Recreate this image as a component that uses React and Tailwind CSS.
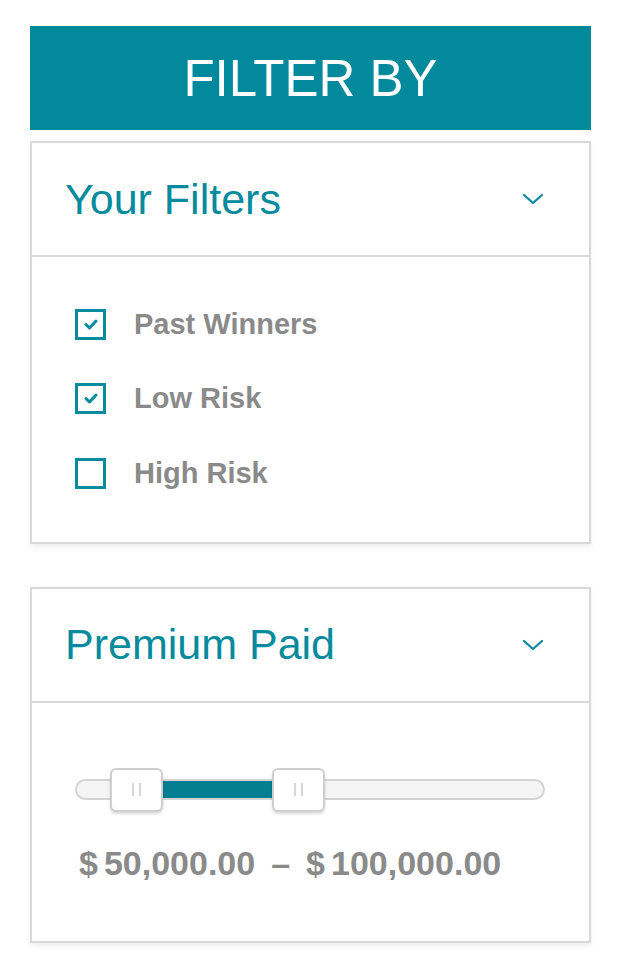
const TEAL = "#058b9d";

function Chevron() {
  return (
    <svg width="22" height="12" viewBox="0 0 22 12" fill="none">
      <path d="M2 2l9 8 9-8" stroke={TEAL} strokeWidth="2.2" strokeLinecap="round" strokeLinejoin="round" />
    </svg>
  );
}

function Checkbox({ label, checked }) {
  return (
    <div className="flex h-[74.5px] items-center">
      <div className="flex h-[31px] w-[31px] items-center justify-center border-[3.5px] border-[#088b9d] bg-white">
        {checked && (
          <svg width="14" height="11" viewBox="0 0 14 11" fill="none">
            <path d="M2 5.5l3.5 3.5L12 2" stroke={TEAL} strokeWidth="3" strokeLinecap="round" strokeLinejoin="round" />
          </svg>
        )}
      </div>
      <span className="ml-[28px] text-[29px] font-bold text-[#8a8a8a]">{label}</span>
    </div>
  );
}

function Card({ title, children, className }) {
  return (
    <div className={"border-2 border-[#d9d9d9] bg-white shadow-[0_3px_6px_rgba(0,0,0,0.07)] " + (className || "")}>
      <div className="flex h-[114px] items-center justify-between border-b-2 border-[#d9d9d9] pl-[33px] pr-[45px]">
        <h2 className="text-[43px] leading-none text-[#058b9d]">{title}</h2>
        <Chevron />
      </div>
      {children}
    </div>
  );
}

function Handle({ left }) {
  return (
    <div
      className="absolute top-0 flex h-[44px] w-[53px] items-center justify-center gap-[5px] rounded-[6px] border-2 border-[#cfcfcf] bg-white shadow-[0_2px_3px_rgba(0,0,0,0.15)]"
      style={{ left }}
    >
      <span className="h-[13px] w-[2px] bg-[#d6d6d6]" />
      <span className="h-[13px] w-[2px] bg-[#d6d6d6]" />
    </div>
  );
}

function RangeSlider() {
  return (
    <div className="relative h-[44px] w-[470px]">
      <div className="absolute left-0 right-0 top-[11px] h-[21px] rounded-full border-2 border-[#d4d4d4] bg-[#f5f5f5]" />
      <div className="absolute left-[86px] top-[13px] h-[17px] w-[114px] bg-[#047f91]" />
      <Handle left={35} />
      <Handle left={197} />
    </div>
  );
}

export default function App() {
  return (
    <div className="min-h-[961px] bg-white pl-[30px] pt-[26px]" style={{ fontFamily: '"Liberation Sans", Arial, sans-serif' }}>
      <div className="w-[561px]">
        <div className="flex h-[104px] items-center justify-center bg-[#03899c]">
          <h1 className="text-[51px] leading-none text-white">FILTER BY</h1>
        </div>

        <Card title="Your Filters" className="mt-[11px]">
          <div className="pb-[31px] pl-[43px] pt-[30px]">
            <Checkbox label="Past Winners" checked />
            <Checkbox label="Low Risk" checked />
            <Checkbox label="High Risk" />
          </div>
        </Card>

        <Card title="Premium Paid" className="mt-[43px]">
          <div className="pb-[58px] pl-[43px] pt-[65px]">
            <RangeSlider />
            <p className="mt-[31px] flex items-center pl-[4px] text-[34px] font-bold leading-[40px] text-[#8a8a8a]">
              <span className="mr-[6px]">$</span>
              <span>50,000.00</span>
              <span className="mx-[16px]">&ndash;</span>
              <span className="mr-[6px]">$</span>
              <span>100,000.00</span>
            </p>
          </div>
        </Card>
      </div>
    </div>
  );
}
